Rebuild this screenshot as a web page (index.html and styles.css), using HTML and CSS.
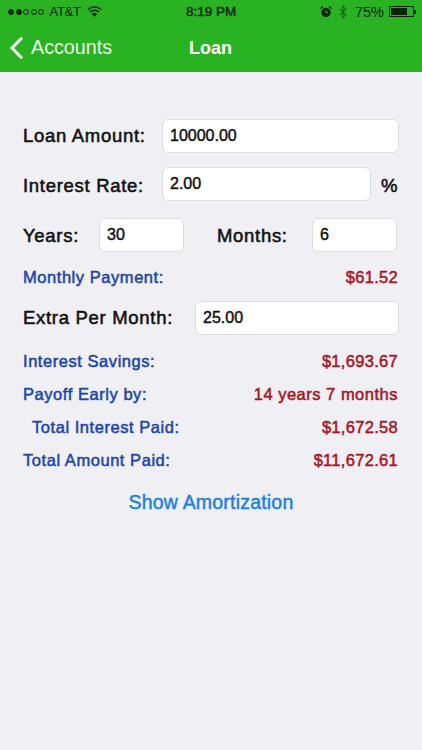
FILE: index.html
```html
<!DOCTYPE html>
<html lang="en">
<head>
  <meta charset="UTF-8">
  <meta name="viewport" content="width=device-width, initial-scale=1.0">
  <title>Loan</title>
  <link rel="stylesheet" href="styles.css">
</head>
<body>
  <div class="header">
    <div class="status-bar">
      <div class="status-left">
        <span class="dot on"></span><span class="dot on"></span><span class="dot"></span><span class="dot"></span><span class="dot"></span>
        <span class="carrier">AT&amp;T</span>
        <svg class="wifi" width="15" height="11" viewBox="0 0 15 11">
          <path d="M.8 3.700a9.700 9.700 0 0 1 13.400 0" fill="none" stroke="#0c240a" stroke-width="1.500"/>
          <path d="M3 6a6.500 6.500 0 0 1 9 0" fill="none" stroke="#0c240a" stroke-width="1.500"/>
          <path d="M7.500 10.800 4.900 8a3.700 3.700 0 0 1 5.200 0z" fill="#0c240a"/>
        </svg>
      </div>
      <div class="status-time">8:19 PM</div>
      <div class="status-right">
        <svg class="alarm" width="12" height="12" viewBox="0 0 12 12">
          <circle cx="6" cy="6.500" r="4.700" fill="#0c240a"/>
          <path d="M6 4V6.500H8" fill="none" stroke="#29b322" stroke-width="1"/>
          <path d="M.5 2.600 2.800.6M11.500 2.600 9.200.6" stroke="#0c240a" stroke-width="1.300"/>
        </svg>
        <svg class="bt" width="8" height="14" viewBox="0 0 8 14">
          <path d="M.8 3.800l6 6L3.900 13V1l2.900 3L.8 10.200" fill="none" stroke="#17661a" stroke-width="1.100"/>
        </svg>
        <span class="battery-text">75%</span>
        <span class="battery"><span class="battery-level"></span></span><span class="battery-tip"></span>
      </div>
    </div>
    <div class="nav-bar">
      <a class="back" href="#">
        <svg width="15" height="24" viewBox="0 0 15 24">
          <path d="M13 1.800 3 12l10 10.200" fill="none" stroke="#f4fbf3" stroke-width="3"/>
        </svg>
        Accounts
      </a>
      <div class="nav-title">Loan</div>
    </div>
  </div>

  <div class="form">
    <div class="row row-amount">
      <label class="label">Loan Amount:</label>
      <div class="input input-wide">10000.00</div>
    </div>
    <div class="row row-rate">
      <label class="label">Interest Rate:</label>
      <div class="input input-rate">2.00</div>
      <span class="percent">%</span>
    </div>
    <div class="row row-term">
      <label class="label">Years:</label>
      <div class="input input-years">30</div>
      <label class="label label-months">Months:</label>
      <div class="input input-months">6</div>
    </div>
    <div class="result result-payment"><span>Monthly Payment:</span><span class="value">$61.52</span></div>
    <div class="row row-extra">
      <label class="label">Extra Per Month:</label>
      <div class="input input-extra">25.00</div>
    </div>
    <div class="result result-savings"><span>Interest Savings:</span><span class="value">$1,693.67</span></div>
    <div class="result"><span>Payoff Early by:</span><span class="value value-wide">14 years 7 months</span></div>
    <div class="result"><span class="indent">Total Interest Paid:</span><span class="value">$1,672.58</span></div>
    <div class="result"><span>Total Amount Paid:</span><span class="value">$11,672.61</span></div>
    <a class="show-link" href="#">Show Amortization</a>
  </div>
</body>
</html>
```

FILE: styles.css
```css
* {
  box-sizing: border-box;
}
html, body {
  margin: 0;
  height: 100%;
}
body {
  font-family: 'Liberation Sans', Arial, sans-serif;
  background: #efeff4;
  color: #111;
  overflow: hidden;
}
.header {
  background: #29b322;
  height: 72px;
}
.status-bar {
  height: 23px;
  padding: 0 6px 0 8px;
  display: flex;
  align-items: center;
  justify-content: space-between;
  color: #0c240a;
  font-size: 14px;
  position: relative;
}
.status-left, .status-right {
  display: flex;
  align-items: center;
}
.dot {
  width: 6px;
  height: 6px;
  margin-right: 1.500px;
  border-radius: 50%;
  border: 1px solid #0c240a;
}
.dot.on {
  background: #0c240a;
}
.carrier {
  margin: 0 6px 0 4px;
  font-size: 13px;
  letter-spacing: -0.3px;
}
.status-time {
  position: absolute;
  left: 186px;
  font-size: 13.500px;
  -webkit-text-stroke: 0.4px #0c240a;
}
.status-right .alarm {
  margin-right: 7px;
}
.status-right .bt {
  margin-right: 8px;
}
.battery-text {
  margin-right: 5px;
  font-size: 14.500px;
}
.battery {
  width: 25px;
  height: 11px;
  border: 1px solid #0c240a;
  padding: 1px;
  display: block;
}
.battery-level {
  display: block;
  width: 75%;
  height: 100%;
  background: #0c240a;
}
.battery-tip {
  width: 2px;
  height: 4px;
  background: #0c240a;
}
.nav-bar {
  height: 49px;
  display: flex;
  align-items: center;
  position: relative;
  padding-left: 9px;
}
.back {
  display: flex;
  align-items: center;
  gap: 7px;
  color: #eaf7e8;
  font-size: 19.700px;
  text-decoration: none;
}
.nav-title {
  position: absolute;
  left: 189px;
  padding-top: 1px;
  color: #fff;
  font-size: 18px;
  font-weight: bold;
}
.form {
  padding: 47px 23px 0;
}
.row {
  display: flex;
  align-items: center;
}
.label, .percent {
  font-size: 18.500px;
  letter-spacing: 0.7px;
  color: #111;
  -webkit-text-stroke: 0.55px #111;
}
.input {
  height: 34px;
  padding: 0 7px;
  display: flex;
  align-items: center;
  background: #fff;
  border: 1px solid #dcdce2;
  border-radius: 6px;
  font-size: 16px;
  color: #111;
  -webkit-text-stroke: 0.45px #111;
}
.row-amount .label, .row-rate .label {
  width: 139px;
}
.input-wide {
  width: 237px;
}
.row-rate {
  margin-top: 14px;
}
.row-rate .label, .percent {
  padding-top: 3px;
}
.input-rate {
  width: 209px;
}
.percent {
  margin-left: 10px;
}
.row-term {
  margin-top: 17px;
}
.row-term .label {
  width: 76px;
  padding-top: 1px;
}
.row-term .label-months {
  width: 95px;
  margin-left: 33px;
}
.input-years, .input-months {
  width: 85px;
}
.row-extra {
  margin-top: 14px;
}
.row-extra .label {
  width: 172px;
}
.input-extra {
  width: 204px;
}
.result {
  display: flex;
  justify-content: space-between;
  height: 20px;
  line-height: 20px;
  margin-top: 13px;
  padding-right: 1px;
  font-size: 16.500px;
  letter-spacing: 0.55px;
  color: #1c45a8;
  -webkit-text-stroke: 0.5px #1c45a8;
}
.result-payment {
  margin-top: 15px;
}
.result-savings {
  margin-top: 16px;
}
.value {
  color: #a8141f;
  letter-spacing: 0.3px;
  -webkit-text-stroke: 0.5px #a8141f;
}
.value-wide {
  letter-spacing: 0.5px;
}
.indent {
  padding-left: 9px;
}
.show-link {
  display: block;
  margin-top: 21px;
  text-align: center;
  color: #1a80e5;
  font-size: 19.500px;
  letter-spacing: 0.2px;
  -webkit-text-stroke: 0.45px #1a80e5;
  text-decoration: none;
}
```
